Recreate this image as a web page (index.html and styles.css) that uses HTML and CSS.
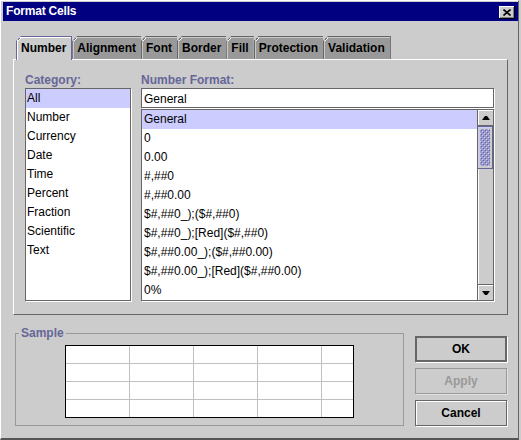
FILE: index.html
```html
<!DOCTYPE html>
<html>
<head>
<meta charset="utf-8">
<title>Format Cells</title>
<link rel="stylesheet" href="styles.css">
</head>
<body>
<div class="window">
  <div class="titlebar">
    <span class="title">Format Cells</span>
    <span class="close">
      <svg width="8" height="7" viewBox="0 0 8 7"><path d="M0.5 0.5 L7.5 6.5 M7.5 0.5 L0.5 6.5" stroke="#000" stroke-width="1.6" fill="none"/></svg>
    </span>
  </div>

  <div class="tabs">
    <div class="tab selected">Number</div>
    <div class="tab">Alignment</div>
    <div class="tab">Font</div>
    <div class="tab">Border</div>
    <div class="tab">Fill</div>
    <div class="tab">Protection</div>
    <div class="tab last">Validation</div>
  </div>

  <div class="pane">
    <div class="col cat-col">
      <div class="label">Category:</div>
      <div class="list cat-list">
        <div class="row sel">All</div>
        <div class="row">Number</div>
        <div class="row">Currency</div>
        <div class="row">Date</div>
        <div class="row">Time</div>
        <div class="row">Percent</div>
        <div class="row">Fraction</div>
        <div class="row">Scientific</div>
        <div class="row">Text</div>
      </div>
    </div>
    <div class="col fmt-col">
      <div class="label">Number Format:</div>
      <div class="field">General</div>
      <div class="list fmt-list">
        <div class="items">
          <div class="row sel">General</div>
          <div class="row">0</div>
          <div class="row">0.00</div>
          <div class="row">#,##0</div>
          <div class="row">#,##0.00</div>
          <div class="row">$#,##0_);($#,##0)</div>
          <div class="row">$#,##0_);[Red]($#,##0)</div>
          <div class="row">$#,##0.00_);($#,##0.00)</div>
          <div class="row">$#,##0.00_);[Red]($#,##0.00)</div>
          <div class="row">0%</div>
        </div>
        <div class="scrollbar">
          <div class="sb-btn up"><svg width="8" height="4" viewBox="0 0 8 4"><polygon points="3,0 5,0 8,4 0,4" fill="#000"/></svg></div>
          <div class="sb-thumb"></div>
          <div class="sb-track"></div>
          <div class="sb-btn down"><svg width="8" height="4" viewBox="0 0 8 4"><polygon points="0,0 8,0 5,4 3,4" fill="#000"/></svg></div>
        </div>
      </div>
    </div>
  </div>

  <div class="bottom">
    <fieldset class="sample">
      <legend>Sample</legend>
      <div class="sample-body">
        <div class="sheet">
          <div></div><div></div><div></div><div></div><div></div>
          <div></div><div></div><div></div><div></div><div></div>
          <div></div><div></div><div></div><div></div><div></div>
          <div></div><div></div><div></div><div></div><div></div>
        </div>
      </div>
    </fieldset>
    <div class="buttons">
      <button class="btn default">OK</button>
      <button class="btn" disabled>Apply</button>
      <button class="btn">Cancel</button>
    </div>
  </div>
</div>
</body>
</html>
```

FILE: styles.css
```css
* { box-sizing: border-box; }

html, body {
  margin: 0;
  padding: 0;
  background: #cccccc;
}

body {
  font-family: "Liberation Sans", Arial, sans-serif;
  font-size: 12px;
  color: #000;
}

.window {
  width: 519px;
  height: 440px;
  background: #cccccc;
  border-top: 1px solid #ffffff;
  border-left: 1px solid #ffffff;
  border-right: 1px solid #666666;
  border-bottom: 2px solid #555555;
  padding: 1px 0 0 2px;
  display: flex;
  flex-direction: column;
}

/* Title bar */
.titlebar {
  height: 19px;
  flex: none;
  background: #000080;
  color: #ffffff;
  display: flex;
  justify-content: space-between;
  align-items: flex-start;
  padding: 0 3px 0 3px;
}

.title {
  font-weight: bold;
  font-size: 12px;
  line-height: 19px;
  letter-spacing: -0.2px;
}

.close {
  width: 16px;
  height: 13px;
  margin-top: 4px;
  background: #cccccc;
  box-shadow: inset -1px -1px 0 #000000, inset 1px 1px 0 #ffffff, inset -2px -2px 0 #808080;
  display: flex;
  align-items: center;
  justify-content: center;
}

.close svg { display: block; margin-top: -1px; }

/* Tabs */
.tabs {
  display: flex;
  align-items: flex-end;
  height: 23px;
  margin: 15px 0 0 13px;
  position: relative;
  z-index: 1;
  flex: none;
}

.tab {
  height: 23px;
  line-height: 22px;
  padding: 0 5px 0 4px;
  font-weight: bold;
  font-size: 12px;
  background-color: #999999;
  background-image: linear-gradient(135deg, transparent 3.5px, #666666 3.5px, #666666 4.4px, #ffffff 4.4px, #ffffff 5.2px, transparent 5.2px);
  background-origin: border-box;
  border-top: 1px solid #666666;
  border-left: 1px solid #666666;
  box-shadow: inset 1px 1px 0 #c8c8c8;
  clip-path: polygon(5px 0, 100% 0, 100% 100%, 0 100%, 0 5px);
  white-space: nowrap;
}

.tab.last { border-right: 1px solid #666666; }

.tab.selected {
  height: 24px;
  margin-bottom: -1px;
  background-color: #cccccc;
  background-image: linear-gradient(135deg, transparent 3.5px, #666699 3.5px, #666699 4.4px, #ffffff 4.4px, #ffffff 5.2px, transparent 5.2px);
  border-top-color: #666699;
  border-left-color: #666699;
  border-right: 1px solid #666699;
  box-shadow: inset 1px 1px 0 #ffffff;
}

/* Pane */
.pane {
  flex: none;
  margin: 0 10px;
  border-top: 1px solid #ffffff;
  border-left: 1px solid #ffffff;
  border-right: 1px solid #666666;
  border-bottom: 1px solid #666666;
  padding: 13px 13px 13px 11px;
  display: flex;
  gap: 10px;
}

.col { display: flex; flex-direction: column; }
.cat-col { width: 106px; flex: none; }
.fmt-col { flex: 1; min-width: 0; }

.label {
  line-height: 15px;
  height: 15px;
  font-weight: bold;
  color: #666699;
}

.list {
  background: #ffffff;
  border: 1px solid #666666;
  box-shadow: 1px 1px 0 #ffffff;
  overflow: hidden;
}

.cat-list { height: 213px; }

.row {
  height: 19px;
  line-height: 19px;
  padding-left: 1px;
  white-space: nowrap;
}

.row.sel { background: #ccccff; }

.field {
  height: 20px;
  background: #ffffff;
  border: 1px solid #666666;
  box-shadow: 1px 1px 0 #ffffff;
  padding: 2px 0 0 2px;
  line-height: 16px;
  margin-bottom: 1px;
}

.fmt-list {
  height: 192px;
  display: flex;
}

.items {
  flex: 1;
  min-width: 0;
  overflow: hidden;
}

.items .row { padding-left: 2px; }

/* Scrollbar */
.scrollbar {
  width: 16px;
  flex: none;
  border-left: 1px solid #666666;
  background: #cccccc;
  display: flex;
  flex-direction: column;
}

.sb-btn {
  height: 16px;
  flex: none;
  display: flex;
  align-items: center;
  justify-content: center;
  box-shadow: inset 1px 1px 0 #ffffff;
}

.sb-btn svg { display: block; }
.sb-btn.up { border-bottom: 1px solid #666666; }
.sb-btn.down { border-top: 1px solid #666666; }

.sb-thumb {
  height: 43px;
  flex: none;
  border: 1px solid #666699;
  border-left: none;
  padding: 2px;
  background-color: #9999cc;
  background-image:
    conic-gradient(at 1px 1px, transparent 75%, #ccccff 0),
    conic-gradient(at 1px 1px, transparent 75%, #666699 0),
    conic-gradient(at 1px 1px, transparent 75%, #ccccff 0),
    conic-gradient(at 1px 1px, transparent 75%, #666699 0);
  background-size: 4px 4px;
  background-position: 0 0, 1px 1px, 2px 2px, 3px 3px;
  background-origin: content-box;
  background-clip: content-box;
  box-shadow: inset 1px 1px 0 #ccccff;
}

.sb-track {
  flex: 1;
  box-shadow: inset 1px 0 0 #ffffff;
}

/* Bottom section */
.bottom {
  flex: none;
  display: flex;
  gap: 11px;
  margin: 11px 10px 0 12px;
}

.sample {
  width: 389px;
  margin: 0;
  padding: 0;
  border: 1px solid #999999;
  min-width: 0;
}

.sample legend {
  margin-left: 3px;
  padding: 0 2px;
  font-weight: bold;
  font-size: 12px;
  line-height: 14px;
  color: #666699;
}

.sample-body {
  padding: 5px 49px 7px 49px;
}

.sheet {
  width: 289px;
  display: grid;
  grid-template-columns: 63px 63px 63px 63px 31px;
  grid-template-rows: repeat(4, 17px);
  gap: 1px;
  background: #c0c0c0;
  border: 1px solid #000000;
}

.sheet div { background: #ffffff; }

.buttons {
  width: 93px;
  flex: none;
  display: flex;
  flex-direction: column;
  gap: 6px;
  padding-top: 10px;
}

.btn {
  width: 92px;
  height: 26px;
  padding: 0;
  margin: 0;
  background: #cccccc;
  border: 1px solid #666666;
  box-shadow: 1px 1px 0 #ffffff, inset 1px 1px 0 #ffffff;
  font-family: "Liberation Sans", Arial, sans-serif;
  font-weight: bold;
  font-size: 12px;
  color: #000000;
}

.btn.default {
  border-width: 2px;
  box-shadow: 1px 1px 0 #ffffff;
}

.btn:disabled {
  border-color: #999999;
  color: #999999;
  box-shadow: 1px 1px 0 #e0e0e0;
}
```
